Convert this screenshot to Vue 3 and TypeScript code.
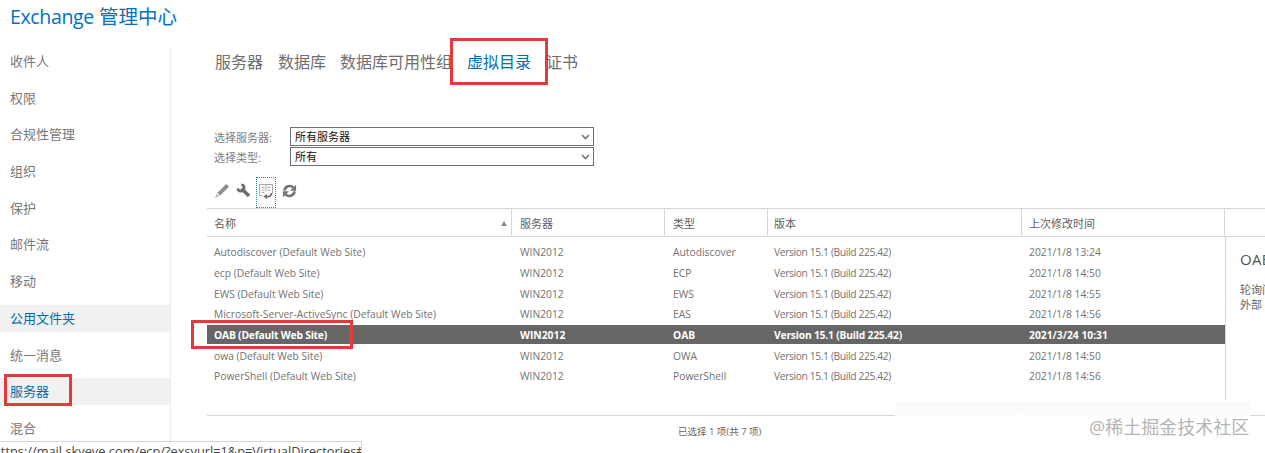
<script setup lang="ts">
const navItems = [
  { label: '收件人' }, { label: '权限' }, { label: '合规性管理' }, { label: '组织' },
  { label: '保护' }, { label: '邮件流' }, { label: '移动' }, { label: '公用文件夹', active: true },
  { label: '统一消息' }, { label: '服务器', active: true }, { label: '混合' },
]
const tabs = [
  { label: '服务器', width: 63 }, { label: '数据库', width: 62 }, { label: '数据库可用性组', width: 127 },
  { label: '虚拟目录', width: 79, active: true }, { label: '证书', width: 40 },
]
const heads = ['名称', '服务器', '类型', '版本', '上次修改时间']
const rows = [
  ['Autodiscover (Default Web Site)', 'WIN2012', 'Autodiscover', 'Version 15.1 (Build 225.42)', '2021/1/8 13:24'],
  ['ecp (Default Web Site)', 'WIN2012', 'ECP', 'Version 15.1 (Build 225.42)', '2021/1/8 14:50'],
  ['EWS (Default Web Site)', 'WIN2012', 'EWS', 'Version 15.1 (Build 225.42)', '2021/1/8 14:55'],
  ['Microsoft-Server-ActiveSync (Default Web Site)', 'WIN2012', 'EAS', 'Version 15.1 (Build 225.42)', '2021/1/8 14:56'],
  ['OAB (Default Web Site)', 'WIN2012', 'OAB', 'Version 15.1 (Build 225.42)', '2021/3/24 10:31'],
  ['owa (Default Web Site)', 'WIN2012', 'OWA', 'Version 15.1 (Build 225.42)', '2021/1/8 14:50'],
  ['PowerShell (Default Web Site)', 'WIN2012', 'PowerShell', 'Version 15.1 (Build 225.42)', '2021/1/8 14:56'],
]
const filters = [
  { label: '选择服务器:', value: '所有服务器' },
  { label: '选择类型:', value: '所有' },
]
</script>

<template>
  <div class="app">
    <header class="header"><span class="brand">Exchange</span> 管理中心</header>
    <div class="body">
      <nav class="side">
        <div v-for="n in navItems" :key="n.label" class="nav" :class="{ active: n.active }">{{ n.label }}</div>
      </nav>
      <main class="main">
        <div class="tabs">
          <span v-for="t in tabs" :key="t.label" class="tab" :class="{ active: t.active }" :style="{ width: t.width + 'px' }">{{ t.label }}</span>
        </div>
        <div class="filters">
          <label v-for="f in filters" :key="f.label" class="filter">
            <span class="flabel">{{ f.label }}</span>
            <span class="selwrap">
              <select class="sel"><option>{{ f.value }}</option></select>
              <svg class="chev" width="9" height="6" viewBox="0 0 9 6" fill="none"><path d="M1 1l3.500 3.500L8 1" stroke="#777" stroke-width="1.700"/></svg>
            </span>
          </label>
        </div>
        <div class="toolbar">
          <span class="tool pencil">
            <svg width="16" height="16" viewBox="0 0 16 16"><path d="M12.200 1l2.800 2.800-8.800 8.800-2.800-2.800z" fill="#8f8f8f"/><path d="M2.700 10.500l2.800 2.800-4.500 1.700z" fill="#bcbcbc"/></svg>
          </span>
          <span class="tool wrench">
            <svg width="15" height="15" viewBox="0 0 15 15" fill="none" stroke="#6b6b6b"><path d="M1.800 5.300A3.200 3.200 0 1 0 5.300 1.800" stroke-width="2.600"/><path d="M5.500 5.500l7.500 7.500" stroke-width="3.400"/></svg>
          </span>
          <span class="tool focus">
            <svg width="16" height="16" viewBox="0 0 16 16" fill="none" stroke="#a8a8a8"><path d="M1.500 1.500h13v9M1.500 1.500v11h3M8 1.500v7M3.500 4.500h3M3.500 7h3M3.500 9.500h3M9.500 4.500h3M9.500 7h3"/><path d="M13.500 10c0 2.800-2 3.800-5 3.500" stroke="#6e6e6e" stroke-width="1.800"/><path d="M5.500 13.500l3.500-2.600v5.200z" fill="#6e6e6e" stroke="none"/></svg>
          </span>
          <span class="tool refresh">
            <svg width="15" height="14" viewBox="0 0 16 16" fill="none"><path d="M2.200 7.500a5.900 5.900 0 0 1 10.200-3.300" stroke="#747474" stroke-width="3"/><path d="M15.500.800v7h-7z" fill="#747474"/><path d="M13.800 8.500a5.900 5.900 0 0 1-10.200 3.300" stroke="#747474" stroke-width="3"/><path d="M.5 15.200v-7h7z" fill="#747474"/></svg>
          </span>
        </div>
        <div class="thead">
          <div v-for="(h, i) in heads" :key="h" class="th" :class="'c' + i">
            {{ h }}<span v-if="i === 0" class="sort"></span>
          </div>
        </div>
        <div class="content">
          <div class="rows">
            <div v-for="r in rows" :key="r[0]" class="row" :class="{ sel_row: r[0].startsWith('OAB') }">
              <div v-for="(c, i) in r" :key="i" class="td" :class="'c' + i">{{ c }}</div>
            </div>
          </div>
          <aside class="detail">
            <div class="dtitle">OAB</div>
            <div class="dtext">轮询间<br>外部</div>
          </aside>
        </div>
        <footer class="foot">已选择 1 项(共 7 项)</footer>
      </main>
    </div>
    <div class="mark box-tab"></div>
    <div class="mark box-nav"></div>
    <div class="mark box-row"></div>
    <div class="wm">@稀土掘金技术社区</div>
    <div class="status"><span class="url">https://mail.skyeye.com/ecp/?exsvurl=1&amp;p=VirtualDirectories#</span></div>
  </div>
</template>

<style>
html, body { margin: 0; background: #fff; }
</style>

<style scoped>
.app {
  position: relative;
  width: 1265px;
  height: 453px;
  overflow: hidden;
  background: #fff;
  color: #666;
  font-family: "Open Sans", "Noto Sans CJK SC", sans-serif;
}
.header {
  height: 48px;
  box-sizing: border-box;
  padding-left: 10px;
  font-size: 19.5px;
  line-height: 34px;
  color: #0072c6;
}
.brand { letter-spacing: -0.35px; }
.body { display: flex; height: 405px; }
.side {
  width: 170px;
  flex: none;
  border-right: 1px solid #ececec;
  display: flex;
  flex-direction: column;
  gap: 9.7px;
}
.nav {
  flex: none;
  height: 27px;
  line-height: 27.800px;
  padding-left: 10px;
  font-size: 13px;
  color: #787878;
}
.nav.active { background: #f1f1f1; color: #006fa8; }
.main { flex: 1; min-width: 0; margin-left: 36px; display: flex; flex-direction: column; }
.tabs { height: 28px; padding-left: 8px; display: flex; align-items: center; }
.tab { flex: none; font-size: 16px; line-height: 28px; color: #6e6e6e; white-space: nowrap; }
.tab.active { color: #006fa8; }
.filters { margin-top: 51px; padding-left: 7px; display: flex; flex-direction: column; gap: 1px; }
.filter { display: flex; align-items: center; height: 19px; }
.flabel { width: 76px; font-size: 11px; color: #808080; flex: none; }
.selwrap { position: relative; display: block; width: 304px; height: 19px; }
.sel {
  display: block;
  appearance: none;
  width: 304px;
  height: 19px;
  box-sizing: border-box;
  border: 1px solid #707070;
  border-radius: 0;
  background: #fff;
  padding: 0 0 0 4px;
  font: 11px "Open Sans", "Noto Sans CJK SC", sans-serif;
  color: #111;
}
.chev { position: absolute; right: 4px; top: 7px; pointer-events: none; }
.toolbar { height: 31px; margin-top: 11px; padding-left: 7px; display: flex; align-items: center; }
.tool { display: flex; align-items: center; justify-content: center; margin-top: -4px; }
.pencil { width: 16px; margin-right: 6px; }
.wrench { width: 15px; margin-right: 5px; }
.tool.focus {
  width: 20px;
  height: 31px;
  margin: 0 6px 0 0;
  padding-bottom: 3px;
  box-sizing: border-box;
  border: 1px dotted #2a86b4;
}
.tool.refresh { width: 15px; }
.thead {
  display: flex;
  height: 29px;
  box-sizing: border-box;
  border-top: 1px solid #d4d8da;
  border-bottom: 1px solid #d4d8da;
}
.th {
  position: relative;
  height: 27px;
  line-height: 29px;
  font-size: 11px;
  color: #606060;
  box-sizing: border-box;
  border-right: 1px solid #d4d8da;
  flex: none;
}
.c0 { width: 305px; padding-left: 7px; }
.c1 { width: 153px; padding-left: 8px; }
.c2 { width: 103px; padding-left: 8px; }
.c3 { width: 254px; padding-left: 6px; }
.c4 { width: 203px; padding-left: 7px; }
.sort {
  position: absolute;
  right: 4px;
  top: 12px;
  border-left: 3px solid transparent;
  border-right: 3px solid transparent;
  border-bottom: 5px solid #888;
}
.content { display: flex; height: 163px; }
.rows { width: 1018px; flex: none; padding-top: 5px; box-sizing: border-box; }
.row { display: flex; height: 20.67px; align-items: center; }
.td { flex: none; box-sizing: border-box; font-size: 10.3px; color: #727272; white-space: nowrap; }
.td.c3 { letter-spacing: -0.38px; }
.row.sel_row { background: #666; height: 19px; margin: 0.83px 0; }
.row.sel_row .td { color: #fff; font-weight: 700; }
.row.sel_row .td.c0 { letter-spacing: -0.2px; }
.row.sel_row .td.c3 { letter-spacing: -0.2px; }
.detail { flex: 1; min-width: 0; border-left: 1px solid #d4d8da; padding: 12px 0 0 14px; overflow: hidden; white-space: nowrap; }
.dtitle { font-size: 15px; line-height: 20px; color: #555; letter-spacing: 0.3px; }
.dtext { margin-top: 13px; font-size: 11px; line-height: 15px; color: #666; }
.foot {
  margin-top: 15px;
  height: 31px;
  border-top: 1px solid #d4d8da;
  font-size: 9.5px;
  line-height: 31px;
  padding-left: 471px;
  color: #666;
}
.mark { position: absolute; box-sizing: border-box; border: 3px solid #e5393c; }
.box-tab { left: 450px; top: 38px; width: 98px; height: 47px; }
.box-nav { left: 4px; top: 374px; width: 68px; height: 32px; }
.box-row { left: 191px; top: 320px; width: 162px; height: 29px; }
.wm {
  position: absolute;
  left: 895px;
  top: 403px;
  width: 355px;
  height: 50px;
  box-sizing: border-box;
  padding: 13px 0 0 194px;
  background: linear-gradient(#f9f9f9, #fff 35%);
  font-size: 18px;
  line-height: 22px;
  color: #b5b5b5;
  white-space: nowrap;
}
.status {
  position: absolute;
  left: 0;
  top: 441px;
  width: 362px;
  height: 12px;
  box-sizing: border-box;
  background: #fff;
  border-top: 1px solid #d5d5d5;
  border-right: 1px solid #d5d5d5;
  font-size: 12.8px;
  line-height: 18px;
  color: #444;
  white-space: nowrap;
  overflow: hidden;
}
.url { display: block; margin-left: -7px; }
</style>
